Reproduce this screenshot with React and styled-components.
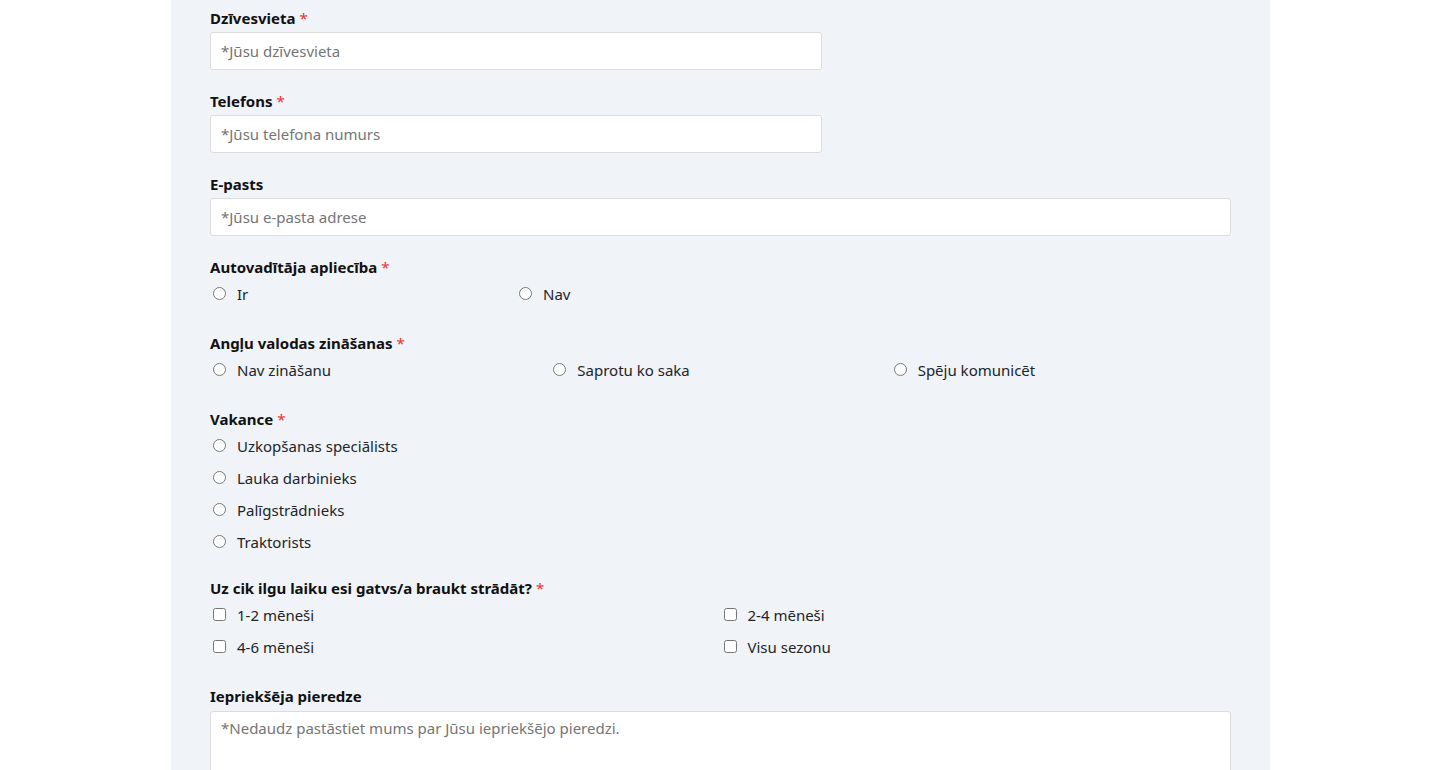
import React from "react";
import styled, { createGlobalStyle } from "styled-components";

const GlobalStyle = createGlobalStyle`
  html, body {
    margin: 0;
    padding: 0;
    background: #ffffff;
    font-family: "Noto Sans", "Open Sans", Arial, sans-serif;
    color: #212529;
  }
  * {
    box-sizing: border-box;
  }
`;

const Page = styled.div`
  display: flex;
  justify-content: center;
  height: 770px;
  overflow: hidden;
`;

const Panel = styled.div`
  width: 1099px;
  margin-left: 1px;
  background: #f0f3f7;
  padding: 6px 39px 0 39px;
`;

const Group = styled.div`
  margin-bottom: ${(p) => p.$gap || 19}px;
`;

const Label = styled.div`
  font-size: 15px;
  font-weight: 700;
  line-height: 24px;
  margin-bottom: ${(p) => p.$space || 2}px;
  color: #111111;
`;

const Required = styled.span`
  color: #f03030;
  font-weight: 400;
  margin-left: 4px;
`;

const TextInput = styled.input`
  display: block;
  width: ${(p) => p.$width || "100%"};
  height: 38px;
  border: 1px solid #dcdcdc;
  border-radius: 3px;
  background: #ffffff;
  padding: 0 10px;
  font-family: inherit;
  font-size: 15px;
  color: #212529;
  outline: none;
  &::placeholder {
    color: #757575;
  }
`;

const TextArea = styled.textarea`
  display: block;
  width: 100%;
  height: 110px;
  border: 1px solid #dcdcdc;
  border-radius: 3px;
  background: #ffffff;
  padding: 6px 10px;
  font-family: inherit;
  font-size: 15px;
  resize: none;
  outline: none;
  &::placeholder {
    color: #757575;
  }
`;

const Options = styled.div`
  display: grid;
  grid-template-columns: ${(p) => p.$cols || "1fr"};
  margin-top: -3px;
`;

const Option = styled.label`
  display: flex;
  align-items: center;
  height: 32px;
  font-size: 15px;
  color: #212529;
`;

const Control = styled.input`
  width: 13px;
  height: 13px;
  margin: 0 11px 2px 3px;
  accent-color: #0d6efd;
`;

const Field = ({ label, required, placeholder, width }) => (
  <Group>
    <Label>
      {label}
      {required && <Required>*</Required>}
    </Label>
    <TextInput placeholder={placeholder} $width={width} />
  </Group>
);

const Choice = ({ label, name, type = "radio", options, cols, gap }) => (
  <Group $gap={gap || 21}>
    <Label $space={0}>
      {label}
      <Required>*</Required>
    </Label>
    <Options $cols={cols}>
      {options.map((o) => (
        <Option key={o}>
          <Control type={type} name={name} />
          {o}
        </Option>
      ))}
    </Options>
  </Group>
);

const App = () => {
  return (
    <React.Fragment>
      <GlobalStyle />
      <Page>
        <Panel>
          <Field
            label="Dzīvesvieta"
            required
            placeholder="*Jūsu dzīvesvieta"
            width="612px"
          />
          <Field
            label="Telefons"
            required
            placeholder="*Jūsu telefona numurs"
            width="612px"
          />
          <Field label="E-pasts" placeholder="*Jūsu e-pasta adrese" />
          <Choice
            label="Autovadītāja apliecība"
            name="licence"
            cols="306px 306px"
            options={["Ir", "Nav"]}
          />
          <Choice
            label="Angļu valodas zināšanas"
            name="english"
            cols="repeat(3, 1fr)"
            options={["Nav zināšanu", "Saprotu ko saka", "Spēju komunicēt"]}
          />
          <Choice
            label="Vakance"
            name="vacancy"
            gap={18}
            options={[
              "Uzkopšanas speciālists",
              "Lauka darbinieks",
              "Palīgstrādnieks",
              "Traktorists",
            ]}
          />
          <Choice
            label="Uz cik ilgu laiku esi gatvs/a braukt strādāt?"
            name="period"
            type="checkbox"
            cols="1fr 1fr"
            options={["1-2 mēneši", "2-4 mēneši", "4-6 mēneši", "Visu sezonu"]}
          />
          <Group>
            <Label $space={3}>Iepriekšēja pieredze</Label>
            <TextArea placeholder="*Nedaudz pastāstiet mums par Jūsu iepriekšējo pieredzi." />
          </Group>
        </Panel>
      </Page>
    </React.Fragment>
  );
};

export default App;
